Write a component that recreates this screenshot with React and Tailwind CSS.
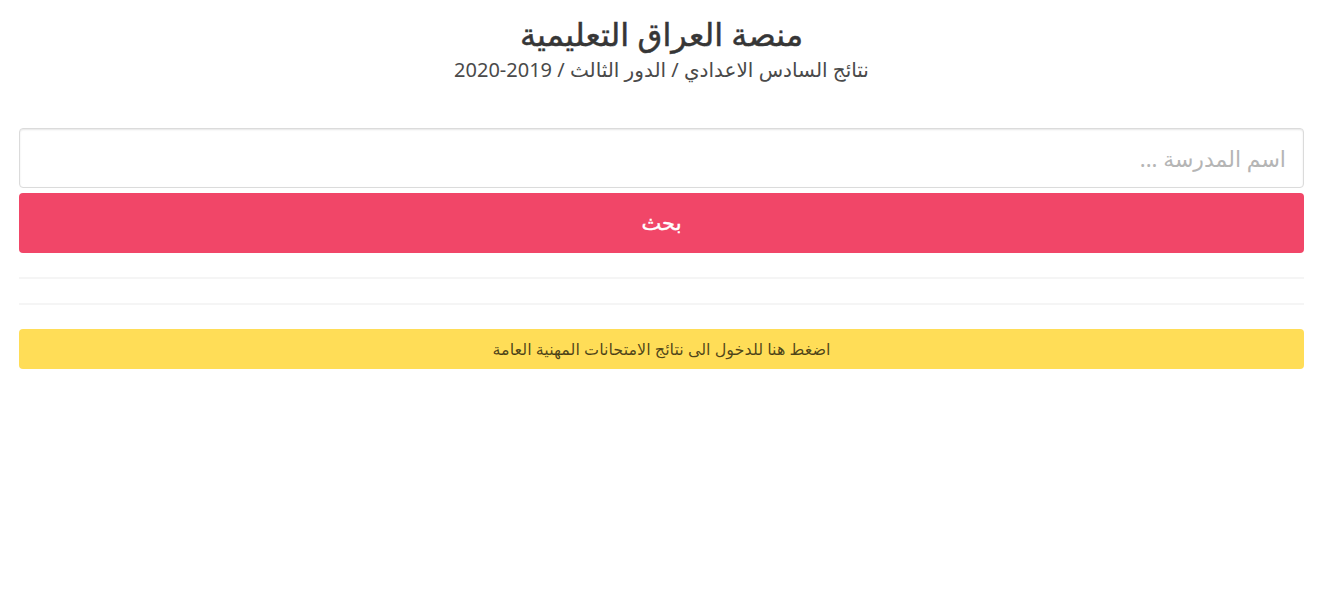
export default function App() {
  return (
    <div dir="rtl" className="min-h-[605px] bg-white pl-[19px] pr-[18px]" style={{ fontFamily: '"Noto Sans", "DejaVu Sans", sans-serif' }}>
      <div className="pt-[11px]">
        <h1 className="text-center text-[32px] leading-[46px] font-normal text-[#363636] [-webkit-text-stroke:0.5px_#363636]">منصة العراق التعليمية</h1>
        <p className="text-center text-[20px] leading-[26px] text-[#4a4a4a]">نتائج السادس الاعدادي / الدور الثالث / 2019-2020</p>
        <div className="mt-[45px]">
          <input
            type="text"
            placeholder="اسم المدرسة ..."
            className="block h-[60px] w-full rounded-[4px] border border-[#dbdbdb] bg-white px-[17px] text-[22px] text-[#363636] shadow-[inset_0_1px_2px_rgba(10,10,10,0.1)] placeholder:text-[#b5b5b5] outline-none"
          />
          <button className="mt-[5px] flex h-[60px] w-full items-center justify-center rounded-[4px] bg-[#f14668] text-[21px] text-white [-webkit-text-stroke:0.4px_#ffffff]">
            بحث
          </button>
        </div>
        <div className="mt-[24px] h-[2px] bg-[#f5f5f5]" />
        <div className="mt-[24px] h-[2px] bg-[#f5f5f5]" />
        <div className="mt-[24px] flex h-[40px] items-center justify-center rounded-[4px] bg-[#ffdd57] text-[16px] text-[rgba(0,0,0,0.7)]">
          اضغط هنا للدخول الى نتائج الامتحانات المهنية العامة
        </div>
      </div>
    </div>
  );
}
